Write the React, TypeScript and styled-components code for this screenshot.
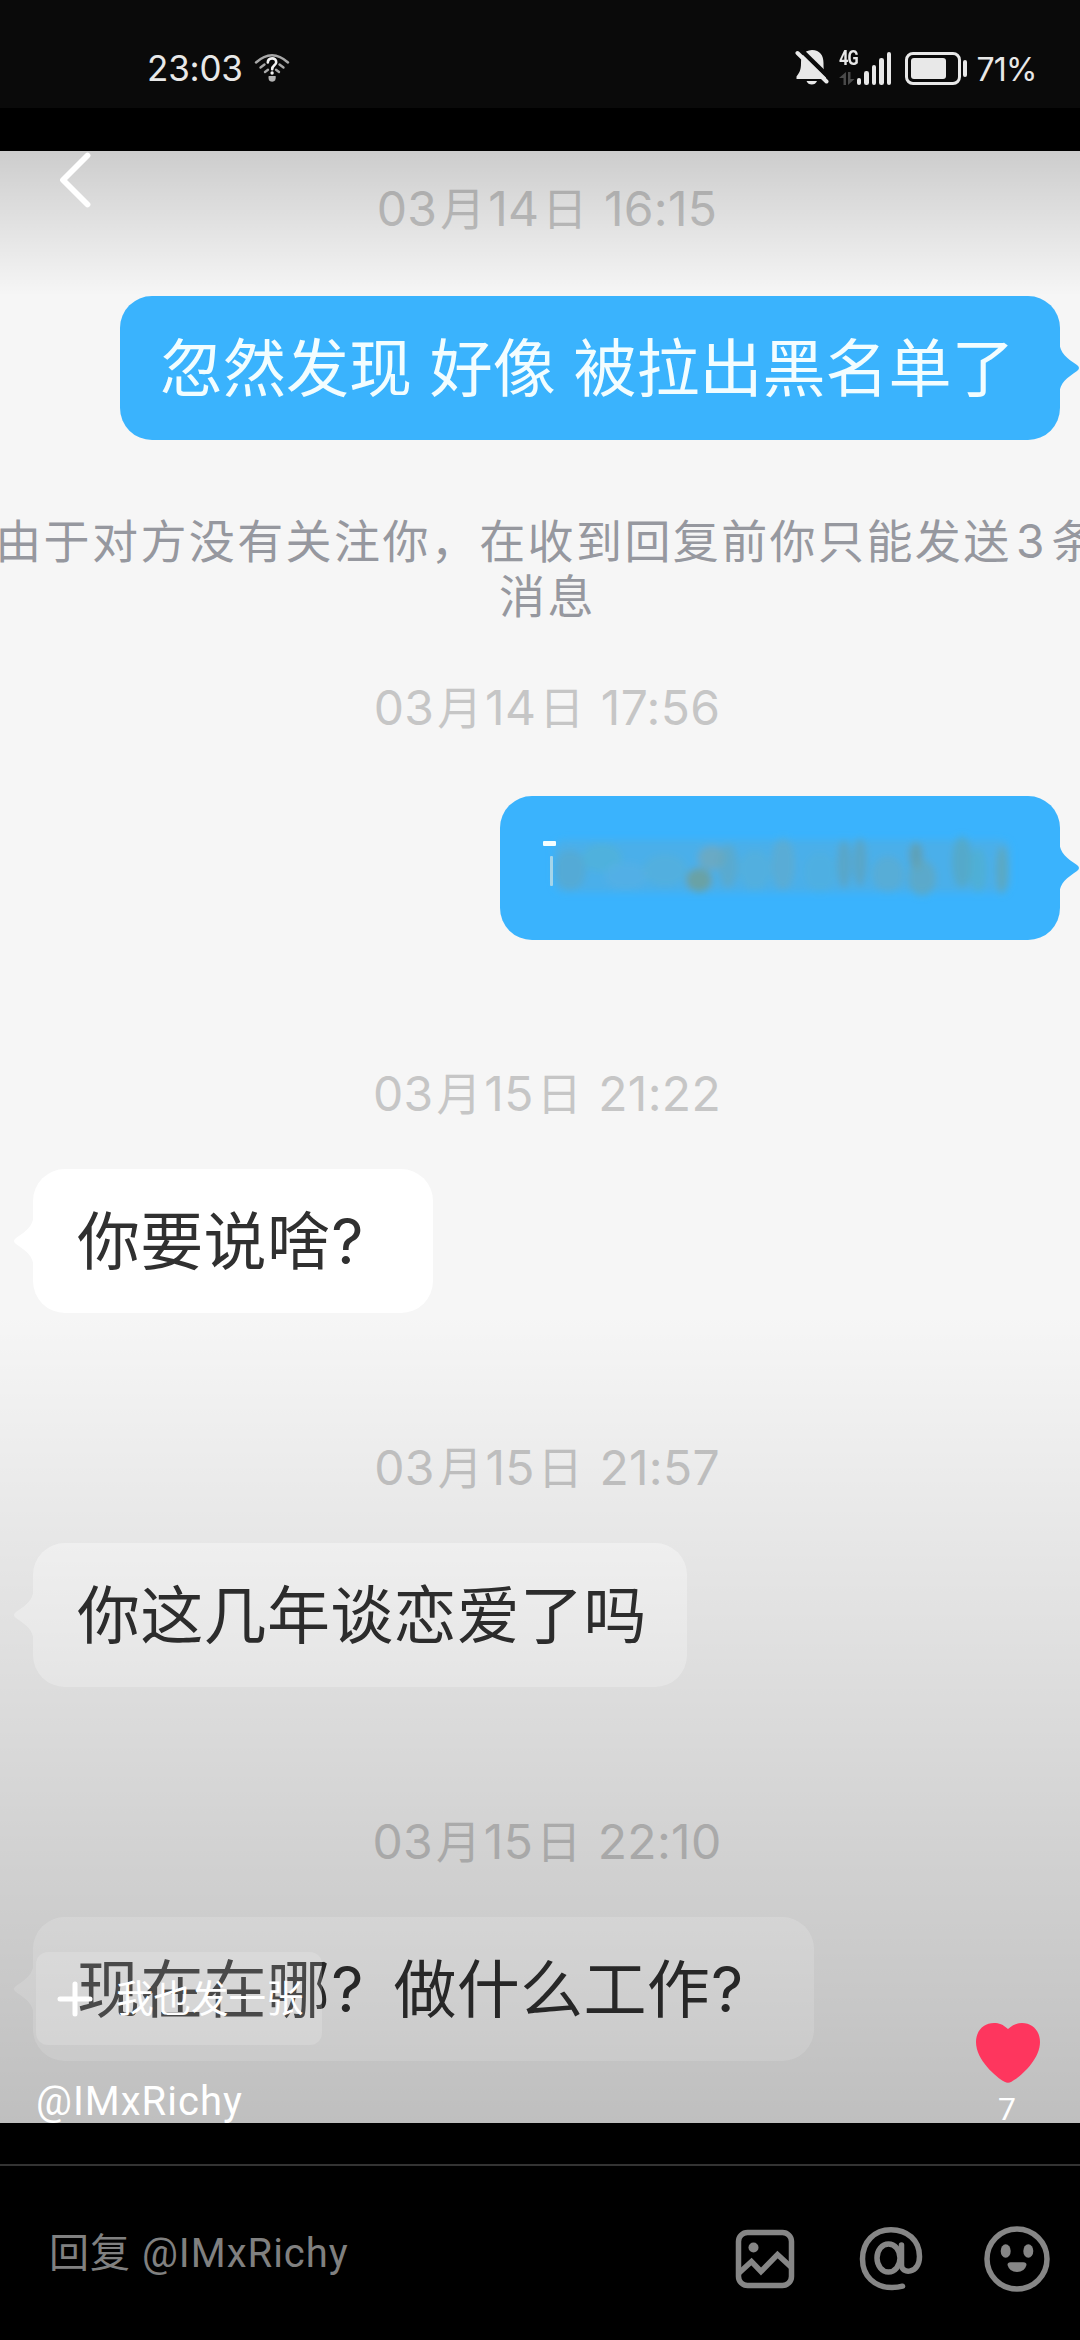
import React from "react";
import styled, { createGlobalStyle } from "styled-components";

const GlobalStyle = createGlobalStyle`
  body { margin: 0; background: #000; }
  * { box-sizing: border-box; }
`;

const chatFont = `Inter, "Noto Sans CJK SC", sans-serif`;
const appFont = `Roboto, "Noto Sans CJK SC", sans-serif`;

const Screen = styled.div`
  display: flex;
  flex-direction: column;
  width: 1080px;
  height: 2340px;
  background: #000;
  overflow: hidden;
  font-family: ${appFont};
`;

/* ---------- status bar ---------- */

const StatusBar = styled.header`
  display: flex;
  justify-content: space-between;
  height: 108px;
  padding: 0 43.5px 0 147px;
  background: #0a0a0a;
  color: #e8e8e8;
`;

const StatusGroup = styled.div`
  display: flex;
  align-items: center;
  padding-top: 28px;
`;

const Clock = styled.span`
  font: 400 35px/40px ${chatFont};
  letter-spacing: -0.2px;
  width: 107px;
  white-space: nowrap;
`;

const MutedBell = styled.svg`
  margin-top: -2px;
`;

const Percent = styled.span`
  font: 400 32px/36px ${chatFont};
  letter-spacing: -0.8px;
  width: 60px;
  white-space: nowrap;
  padding-top: 3px;
`;

const Network = styled.div`
  display: flex;
  align-items: flex-end;
  width: 54px;
  height: 34px;
  margin: 0 12px 0 10px;
`;

const NetworkKind = styled.div`
  display: flex;
  flex-direction: column;
  justify-content: space-between;
  width: 19px;
  height: 34px;
  font: 700 20px/15px "Roboto", sans-serif;
  letter-spacing: -1px;
  transform: scaleX(0.82);
  transform-origin: left;
  white-space: nowrap;
`;

const Bars = styled.div`
  display: flex;
  align-items: flex-end;
  gap: 3px;
  margin-left: -1px;
`;

const Bar = styled.i<{ $h: number }>`
  width: 4.6px;
  height: ${(p) => p.$h}px;
  border-radius: 2.3px;
  background: #e8e8e8;
`;

const Battery = styled.div`
  display: flex;
  align-items: center;
  gap: 2px;
  margin-right: 10px;
`;

const BatteryShell = styled.div`
  width: 56px;
  height: 33px;
  padding: 3px;
  border: 3px solid #e8e8e8;
  border-radius: 8px;
`;

const BatteryLevel = styled.div`
  width: 35px;
  height: 21px;
  border-radius: 3px;
  background: #e8e8e8;
`;

const BatteryTip = styled.div`
  width: 4px;
  height: 17px;
  border-radius: 2px;
  background: #e8e8e8;
`;

/* ---------- photo with the chat ---------- */

const Photo = styled.main`
  position: relative;
  display: flex;
  flex-direction: column;
  height: 1972px;
  margin-top: 43px;
  background: #f6f6f6;
`;

const Conversation = styled.div`
  display: flex;
  flex-direction: column;
  font-family: ${chatFont};
  overflow: hidden;
  height: 100%;
`;

const DateLine = styled.div<{ $top: number }>`
  margin-top: ${(p) => p.$top}px;
  padding-left: 14px;
  height: 60px;
  flex: none;
  font-size: 48px;
  line-height: 60px;
  letter-spacing: 0.3px;
  text-align: center;
  white-space: nowrap;
  color: #c6c6c6;
`;

const Han = styled.span`
  font-size: 45px;
  margin: 0 2.5px 0 3px;
`;

const Notice = styled.div`
  display: flex;
  flex-direction: column;
  align-items: center;
  flex: none;
  margin-top: 74px;
  font-size: 46px;
  line-height: 55px;
  letter-spacing: 2.4px;
  color: #96989f;
  white-space: nowrap;
`;

const NoticeLine = styled.div`
  padding-left: 15px;
`;

const NoticeCount = styled.span`
  margin: 0 4.5px;
`;

const Bubble = styled.div<{ $mine?: boolean; $top: number; $width: number }>`
  position: relative;
  flex: none;
  display: flex;
  align-items: center;
  align-self: ${(p) => (p.$mine ? "flex-end" : "flex-start")};
  width: ${(p) => p.$width}px;
  height: 144px;
  margin: ${(p) => p.$top}px ${(p) => (p.$mine ? 20 : 0)}px 0 ${(p) => (p.$mine ? 0 : 33)}px;
  padding-left: ${(p) => (p.$mine ? 40 : 44)}px;
  border-radius: 32px;
  background: ${(p) => (p.$mine ? "#3ab3fd" : "#fff")};
  color: ${(p) => (p.$mine ? "#f2fdff" : "#303030")};
  font-size: 63px;
  line-height: 80px;
  letter-spacing: ${(p) => (p.$mine ? 0 : 0.3)}px;
  white-space: nowrap;
`;

const TailShape = styled.svg<{ $mine?: boolean }>`
  position: absolute;
  top: 45px;
  ${(p) => (p.$mine ? "right: -20px;" : "left: -20px; transform: scaleX(-1);")}
`;

const Tail = ({ mine }: { mine?: boolean }) => (
  <TailShape $mine={mine} width="21" height="54" viewBox="0 0 21 54">
    <path
      d="M0 0 C1 13 8 17 18 24 Q22 27 18 30 C8 37 1 41 0 54Z"
      fill={mine ? "#3ab3fd" : "#fff"}
    />
  </TailShape>
);

const Question = styled.span`
  display: inline-block;
  width: 63.3px;
  padding-left: 1px;
`;

const Smudge = styled.svg`
  position: absolute;
  left: 40px;
  top: 32px;
`;

const TopShade = styled.div`
  position: absolute;
  inset: 0 0 auto 0;
  height: 145px;
  background: linear-gradient(rgba(0, 0, 0, 0.17), rgba(0, 0, 0, 0));
`;

const BottomShade = styled.div`
  position: absolute;
  inset: auto 0 0 0;
  height: 810px;
  background: linear-gradient(rgba(0, 0, 0, 0), rgba(0, 0, 0, 0.225));
`;

const BackButton = styled.svg`
  position: absolute;
  left: 54px;
  top: 0;
`;

const PostToo = styled.div`
  position: absolute;
  left: 36px;
  top: 1801px;
  display: flex;
  align-items: center;
  width: 286px;
  height: 93px;
  padding-left: 21px;
  gap: 23px;
  border-radius: 12px;
  background: rgba(255, 255, 255, 0.16);
  color: #fff;
  font-size: 37.5px;
  line-height: 44px;
  white-space: nowrap;
`;

const Author = styled.div`
  position: absolute;
  left: 36px;
  top: 1927px;
  font-size: 40px;
  line-height: 48px;
  letter-spacing: 1px;
  color: #fff;
  white-space: nowrap;
`;

const Like = styled.div`
  position: absolute;
  left: 968px;
  top: 1868px;
  width: 80px;
  display: flex;
  flex-direction: column;
  align-items: center;
  color: #fff;
  font-size: 32px;
  line-height: 38px;
`;

const LikeCount = styled.span`
  margin-top: 3px;
  padding-right: 2px;
`;

/* ---------- reply bar ---------- */

const ReplyBar = styled.footer`
  display: flex;
  align-items: center;
  flex: 1;
  margin-top: 41px;
  padding: 12px 29px 0 49px;
  border-top: 2px solid #333;
  color: #808080;
`;

const Placeholder = styled.div`
  flex: 1;
  font-size: 40px;
  line-height: 48px;
  letter-spacing: 1px;
  white-space: nowrap;
  padding-bottom: 11px;
`;

const Actions = styled.div`
  display: flex;
  align-items: center;
  gap: 58px;
`;

const patches: [number, number, number, number, string, number][] = [
  [30, 34, 16, 20, "#5aa9c9", 0.6],
  [62, 22, 20, 14, "#55b3cf", 0.5],
  [86, 40, 22, 14, "#57b0e6", 0.7],
  [125, 34, 22, 16, "#57b0d8", 0.6],
  [159, 44, 13, 12, "#729f96", 0.8],
  [172, 22, 14, 12, "#78a8b6", 0.7],
  [188, 30, 10, 22, "#62a9c0", 0.6],
  [215, 34, 16, 20, "#55b1dc", 0.7],
  [243, 28, 12, 26, "#68a9c2", 0.5],
  [280, 36, 16, 20, "#52b0de", 0.6],
  [304, 28, 7, 24, "#62a2b4", 0.6],
  [320, 26, 7, 24, "#62a2b4", 0.6],
  [348, 38, 16, 18, "#5dadd0", 0.7],
  [376, 20, 7, 14, "#6c9a9a", 0.6],
  [382, 42, 14, 18, "#66a6b8", 0.6],
  [422, 26, 10, 26, "#5aa6b8", 0.6],
  [438, 34, 9, 22, "#52b0cc", 0.6],
  [462, 34, 6, 24, "#62a6b4", 0.7],
];

const GRAY = "#868686";

export default function App() {
  return (
    <Screen>
      <GlobalStyle />
      <StatusBar>
        <StatusGroup>
          <Clock>23:03</Clock>
          <svg width="36" height="30" viewBox="0 0 36 30" fill="none" strokeLinecap="round">
            <path d="M2 9.5 Q18 -5 34 9.5" stroke="#a8a8a8" strokeWidth="2.4" />
            <path d="M6.5 14.5 L10.5 11.5 M29.5 14.5 L25.5 11.5 M11 19 L14 16.8 M25 19 L22 16.8" stroke="#a8a8a8" strokeWidth="2.4" />
            <path d="M13.8 9.5 C14 4 22.3 4 22.2 9.2 C22.2 12.5 18.2 12.2 18.2 16.2" stroke="#f2f2f2" strokeWidth="2.6" />
            <circle cx="18.1" cy="20" r="1.7" fill="#f2f2f2" />
            <path d="M14.6 23 L21.6 23 Q22.6 28.5 18.1 28.8 Q13.6 28.5 14.6 23Z" fill="#b4b4b4" />
          </svg>
        </StatusGroup>
        <StatusGroup>
          <MutedBell width="34" height="36" viewBox="0 0 34 36">
            <path d="M17 1 C8.5 1.5 6 7 6 14 C6 22 4 24 1.5 27.5 V30 H31 V27.5 C29 24 28.5 21 28.5 14 C28.5 6 25 1.5 17 1Z" fill="#e8e8e8" />
            <path d="M11.5 32 H22 Q20.5 35.6 16.8 35.6 Q13 35.6 11.5 32Z" fill="#e8e8e8" />
            <path d="M5 0 L35 29.5" stroke="#0a0a0a" strokeWidth="4.5" />
            <path d="M2.5 4 L31.5 32.5" stroke="#e8e8e8" strokeWidth="4" strokeLinecap="round" />
            <path d="M0 7 L6 13 L4 18 L0 18Z" fill="#0a0a0a" />
          </MutedBell>
          <Network>
            <NetworkKind>
              4G
              <svg width="20" height="13" viewBox="0 0 20 13">
                <path d="M8.5 0 V13 H5.5 V6 H0 Z M11 0 V13 L19 7 H14 V0Z" fill="#4a4a4a" />
              </svg>
            </NetworkKind>
            <Bars>
              <Bar $h={7} />
              <Bar $h={14} />
              <Bar $h={20} />
              <Bar $h={27} />
              <Bar $h={33} />
            </Bars>
          </Network>
          <Battery>
            <BatteryShell>
              <BatteryLevel />
            </BatteryShell>
            <BatteryTip />
          </Battery>
          <Percent>71%</Percent>
        </StatusGroup>
      </StatusBar>

      <Photo>
        <Conversation>
          <DateLine $top={28}>03<Han>月</Han>14<Han>日</Han> 16:15</DateLine>
          <Bubble $mine $top={57} $width={940}>
            忽然发现 好像 被拉出黑名单了
            <Tail mine />
          </Bubble>
          <Notice>
            <NoticeLine>
              由于对方没有关注你，在收到回复前你只能发送<NoticeCount>3</NoticeCount>条
            </NoticeLine>
            <NoticeLine>消息</NoticeLine>
          </Notice>
          <DateLine $top={54}>03<Han>月</Han>14<Han>日</Han> 17:56</DateLine>
          <Bubble $mine $top={58} $width={560}>
            <Smudge width="490" height="80" viewBox="0 0 490 80">
              <defs>
                <filter id="soft" x="-5%" y="-20%" width="110%" height="140%">
                  <feGaussianBlur stdDeviation="3.5" />
                </filter>
              </defs>
              <g filter="url(#soft)" transform="translate(0 6)">
                <rect x="14" y="6" width="456" height="52" rx="10" fill="#4caee6" opacity="0.85" />
                {patches.map(([x, y, rx, ry, c, o], i) => (
                  <ellipse key={i} cx={x} cy={y + 2} rx={rx} ry={ry} fill={c} opacity={o} />
                ))}
              </g>
              <rect x="3" y="13" width="13" height="5" rx="1" fill="#f4feff" />
              <rect x="10" y="28" width="3" height="30" rx="1" fill="#a5d5ea" />
            </Smudge>
            <Tail mine />
          </Bubble>
          <DateLine $top={124}>03<Han>月</Han>15<Han>日</Han> 21:22</DateLine>
          <Bubble $top={45} $width={400}>
            你要说啥<Question>?</Question>
            <Tail />
          </Bubble>
          <DateLine $top={125}>03<Han>月</Han>15<Han>日</Han> 21:57</DateLine>
          <Bubble $top={45} $width={654}>
            你这几年谈恋爱了吗
            <Tail />
          </Bubble>
          <DateLine $top={125}>03<Han>月</Han>15<Han>日</Han> 22:10</DateLine>
          <Bubble $top={45} $width={781}>
            现在在哪<Question>?</Question>做什么工作<Question>?</Question>
            <Tail />
          </Bubble>
        </Conversation>

        <TopShade />
        <BottomShade />

        <BackButton width="44" height="60" viewBox="0 0 44 60" fill="none">
          <path d="M33.5 4.5 L9 29 L33.5 53.5" stroke="#fff" strokeWidth="5.8" strokeLinecap="round" strokeLinejoin="round" />
        </BackButton>

        <PostToo>
          <svg width="36" height="36" viewBox="0 0 36 36">
            <path d="M18 3 V33 M3 18 H33" stroke="#fff" strokeWidth="5" strokeLinecap="round" />
          </svg>
          <span>我也发一张</span>
        </PostToo>
        <Author>@IMxRichy</Author>
        <Like>
          <svg width="68" height="68" viewBox="0 0 68 68">
            <path
              d="M34 10 C39 5.5 43 4 48 4 C58.500 4 66 12 66 23 C66 41 46 58 37.500 62.800 Q34 64.800 30.500 62.800 C22 58 2 41 2 23 C2 12 9.500 4 20 4 C25 4 29 5.500 34 10Z"
              fill="#fe365e"
            />
          </svg>
          <LikeCount>7</LikeCount>
        </Like>
      </Photo>

      <ReplyBar>
        <Placeholder>回复 @IMxRichy</Placeholder>
        <Actions>
          <svg width="68" height="68" viewBox="0 0 68 68" fill="none">
            <rect x="7.500" y="7.500" width="53" height="53" rx="9" stroke={GRAY} strokeWidth="5.500" />
            <circle cx="22.500" cy="22.500" r="5" fill={GRAY} />
            <path d="M8 48 L20.500 36.500 L30 46.500 L46.500 29.500 L60 42" stroke={GRAY} strokeWidth="5.500" />
          </svg>
          <svg width="68" height="68" viewBox="0 0 68 68" fill="none" strokeLinecap="round">
            <ellipse cx="31.500" cy="33" rx="11.500" ry="14" stroke={GRAY} strokeWidth="5.500" />
            <path
              d="M44.500 20 V40 C44.500 49.500 62.500 49 62.500 31.500 C62.500 15 50 4.700 34 4.700 C17 4.700 5.500 17 5.500 34 C5.500 51 17.500 62.500 35 62.500 Q41 62.500 45.500 61.200"
              stroke={GRAY}
              strokeWidth="5.500"
            />
          </svg>
          <svg width="68" height="68" viewBox="0 0 68 68" fill="none">
            <circle cx="34" cy="34" r="30" stroke={GRAY} strokeWidth="5.500" />
            <ellipse cx="22.700" cy="26" rx="5" ry="6.700" fill={GRAY} />
            <ellipse cx="45.300" cy="26" rx="5" ry="6.700" fill={GRAY} />
            <path d="M24.500 40 Q24.500 37.300 27.500 37.300 H40.500 Q43.500 37.300 43.500 40 Q41.500 47 34 47 Q26.500 47 24.500 40Z" fill={GRAY} />
          </svg>
        </Actions>
      </ReplyBar>
    </Screen>
  );
}
